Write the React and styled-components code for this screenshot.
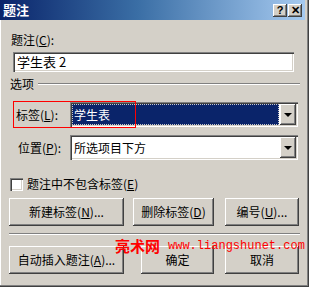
import React from "react";
import styled, { createGlobalStyle } from "styled-components";

const Global = createGlobalStyle`
  html, body { margin: 0; padding: 0; background: #d4d0c8; }
  body { font-family: "Noto Sans CJK SC", "Liberation Sans", sans-serif; font-size: 12px; color: #000; }
  u { text-decoration: underline; text-underline-offset: 1px; }
`;

const Frame = styled.div`
  position: relative;
  width: 309px;
  height: 287px;
  box-sizing: border-box;
  background: #d4d0c8;
  padding: 0 4px 4px 0;
  box-shadow: inset -1px -1px #404040, inset -2px -2px #808080, inset 1px 0 #ffffff;
  overflow: hidden;
`;

const TitleBar = styled.div`
  height: 20px;
  display: flex;
  align-items: center;
  justify-content: space-between;
  padding: 0 3px 0 3px;
  background: linear-gradient(to right, #0a246a 0%, #3a6ea5 45%, #a6caf0 100%);
`;

const Title = styled.div`
  color: #fff;
  font-weight: bold;
  font-size: 13px;
  line-height: 14px;
`;

const CapButtons = styled.div`
  display: flex;
  gap: 1px;
`;

const CapButton = styled.div`
  width: 14px;
  height: 13px;
  box-sizing: border-box;
  background: #d4d0c8;
  box-shadow: inset -1px -1px #404040, inset 1px 1px #ffffff, inset -2px -2px #808080;
  display: flex;
  align-items: center;
  justify-content: center;
  font-family: "Liberation Sans", sans-serif;
  font-weight: bold;
  font-size: 11px;
  line-height: 11px;
`;

const Body = styled.div`
  display: flex;
  flex-direction: column;
  align-items: flex-start;
  box-shadow: inset 1px 0 #ffffff;
`;

const FieldLabel = styled.div`
  margin: 13px 0 0 11px;
  line-height: 14px;
`;

const Sunken = styled.div`
  box-sizing: border-box;
  background: #fff;
  box-shadow: inset 1px 1px #808080, inset 2px 2px #404040, inset -1px -1px #ffffff, inset -2px -2px #d4d0c8;
`;

const TextBox = styled(Sunken)`
  margin: 5px 0 0 13px;
  width: 281px;
  height: 20px;
  padding: 0 4px;
  font-size: 13px;
  line-height: 20px;
`;

const GroupHead = styled.div`
  margin: 5px 0 0 10px;
  width: 290px;
  display: flex;
  align-items: center;
  gap: 4px;
  line-height: 14px;
`;

const Rule = styled.div`
  flex: 1;
  height: 0;
  border-top: 1px solid #808080;
  border-bottom: 1px solid #ffffff;
`;

const FieldRow = styled.div`
  position: relative;
  margin-top: ${(p) => p.$top}px;
  width: 298px;
  display: flex;
  align-items: center;
`;

const RowLabel = styled.div`
  width: 70px;
  box-sizing: border-box;
  padding-left: ${(p) => p.$indent}px;
  line-height: 14px;
`;

const Combo = styled(Sunken)`
  width: 228px;
  height: 25px;
  padding: 2px;
  display: flex;
  gap: 1px;
`;

const ComboText = styled.div`
  flex: 1;
  box-sizing: border-box;
  padding: 0 2px;
  line-height: 21px;
  background: ${(p) => (p.$selected ? "#0a246a" : "transparent")};
  color: ${(p) => (p.$selected ? "#fff" : "#000")};
  outline: ${(p) => (p.$selected ? "1px dotted #c8c8c8" : "none")};
  outline-offset: -1px;
`;

const DropButton = styled.div`
  width: 16px;
  box-sizing: border-box;
  background: #d4d0c8;
  box-shadow: inset -1px -1px #404040, inset 1px 1px #ffffff, inset -2px -2px #808080;
  display: flex;
  align-items: center;
  justify-content: center;
`;

const Arrow = styled.div`
  width: 0;
  height: 0;
  border-left: 4px solid transparent;
  border-right: 4px solid transparent;
  border-top: 4px solid #000;
`;

const Highlight = styled.div`
  position: absolute;
  left: 13px;
  top: -1px;
  width: 121px;
  height: 25px;
  border: 1px solid #ff0000;
  pointer-events: none;
`;

const CheckRow = styled.label`
  margin: 17px 0 0 10px;
  display: flex;
  align-items: center;
  gap: 4px;
  line-height: 14px;
`;

const CheckBox = styled(Sunken)`
  width: 13px;
  height: 13px;
`;

const ButtonRow = styled.div`
  margin: ${(p) => p.$top}px 0 0 9px;
  display: flex;
`;

const Button = styled.div`
  margin-left: ${(p) => p.$gap || 0}px;
  width: ${(p) => p.$w}px;
  height: 28px;
  box-sizing: border-box;
  background: #d4d0c8;
  box-shadow: inset -1px -1px #404040, inset 1px 1px #ffffff, inset -2px -2px #808080;
  display: flex;
  align-items: center;
  justify-content: center;
  line-height: 14px;
`;

const Separator = styled.div`
  margin: 7px 0 0 9px;
  width: 291px;
  border-top: 1px solid #808080;
  border-bottom: 1px solid #ffffff;
`;

const Watermark = styled.div`
  position: absolute;
  left: 115px;
  top: 237px;
  display: flex;
  align-items: center;
  color: #ff0000;
  pointer-events: none;
`;

const MarkName = styled.span`
  font-size: 15px;
  font-weight: 700;
  line-height: 18px;
  margin-right: 8px;
`;

const MarkUrl = styled.span`
  font-family: "Liberation Mono", monospace;
  font-size: 12px;
  line-height: 18px;
`;

export default function App() {
  return (
    <>
      <Global />
      <Frame>
        <TitleBar>
          <Title>题注</Title>
          <CapButtons>
            <CapButton>?</CapButton>
            <CapButton>✕</CapButton>
          </CapButtons>
        </TitleBar>
        <Body>
          <FieldLabel>
            题注(<u>C</u>):
          </FieldLabel>
          <TextBox>学生表 2</TextBox>
          <GroupHead>
            <span>选项</span>
            <Rule />
          </GroupHead>
          <FieldRow $top={11}>
            <RowLabel $indent={16}>
              标签(<u>L</u>):
            </RowLabel>
            <Combo>
              <ComboText $selected>学生表</ComboText>
              <DropButton>
                <Arrow />
              </DropButton>
            </Combo>
            <Highlight />
          </FieldRow>
          <FieldRow $top={8}>
            <RowLabel $indent={18}>
              位置(<u>P</u>):
            </RowLabel>
            <Combo>
              <ComboText>所选项目下方</ComboText>
              <DropButton>
                <Arrow />
              </DropButton>
            </Combo>
          </FieldRow>
          <CheckRow>
            <CheckBox />
            <span>
              题注中不包含标签(<u>E</u>)
            </span>
          </CheckRow>
          <ButtonRow $top={7}>
            <Button $w={115}>
              新建标签(<u>N</u>)...
            </Button>
            <Button $w={81} $gap={9}>
              删除标签(<u>D</u>)
            </Button>
            <Button $w={74} $gap={11}>
              编号(<u>U</u>)...
            </Button>
          </ButtonRow>
          <Separator />
          <ButtonRow $top={11}>
            <Button $w={115}>
              自动插入题注(<u>A</u>)...
            </Button>
            <Button $w={73} $gap={17}>
              确定
            </Button>
            <Button $w={74} $gap={11}>
              取消
            </Button>
          </ButtonRow>
        </Body>
        <Watermark>
          <MarkName>亮术网</MarkName>
          <MarkUrl>www.liangshunet.com</MarkUrl>
        </Watermark>
      </Frame>
    </>
  );
}
